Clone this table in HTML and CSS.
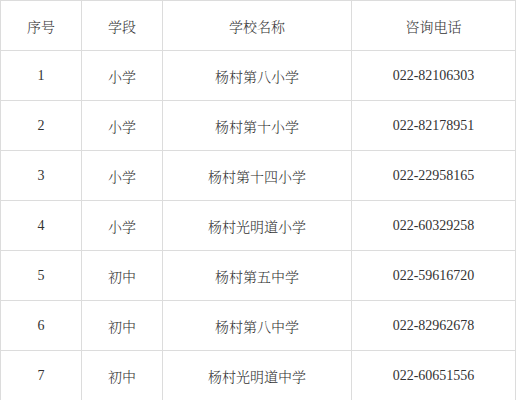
FILE: index.html
```html
<!DOCTYPE html>
<html lang="zh-CN">
<head>
<meta charset="utf-8">
<link rel="stylesheet" href="styles.css">
</head>
<body>
<div class="grid">
  <div class="cell">序号</div><div class="cell">学段</div><div class="cell">学校名称</div><div class="cell">咨询电话</div>
  <div class="cell">1</div><div class="cell">小学</div><div class="cell">杨村第八小学</div><div class="cell">022-82106303</div>
  <div class="cell">2</div><div class="cell">小学</div><div class="cell">杨村第十小学</div><div class="cell">022-82178951</div>
  <div class="cell">3</div><div class="cell">小学</div><div class="cell">杨村第十四小学</div><div class="cell">022-22958165</div>
  <div class="cell">4</div><div class="cell">小学</div><div class="cell">杨村光明道小学</div><div class="cell">022-60329258</div>
  <div class="cell">5</div><div class="cell">初中</div><div class="cell">杨村第五中学</div><div class="cell">022-59616720</div>
  <div class="cell">6</div><div class="cell">初中</div><div class="cell">杨村第八中学</div><div class="cell">022-82962678</div>
  <div class="cell">7</div><div class="cell">初中</div><div class="cell">杨村光明道中学</div><div class="cell">022-60651556</div>
</div>
</body>
</html>
```
FILE: styles.css
```css
html, body {
  margin: 0;
  padding: 0;
  background: #ffffff;
}
.grid {
  display: grid;
  grid-template-columns: 80px 80px 188px 163px;
  grid-auto-rows: 49px;
  gap: 1px;
  padding: 1px;
  width: 514px;
  background: #dcdcdc;
}
.cell {
  background: #ffffff;
  display: flex;
  align-items: center;
  justify-content: center;
  font-family: "Liberation Serif", "Noto Serif CJK SC", "Noto Sans CJK SC", serif;
  font-size: 14px;
  font-weight: 300;
  color: #333333;
}
```
